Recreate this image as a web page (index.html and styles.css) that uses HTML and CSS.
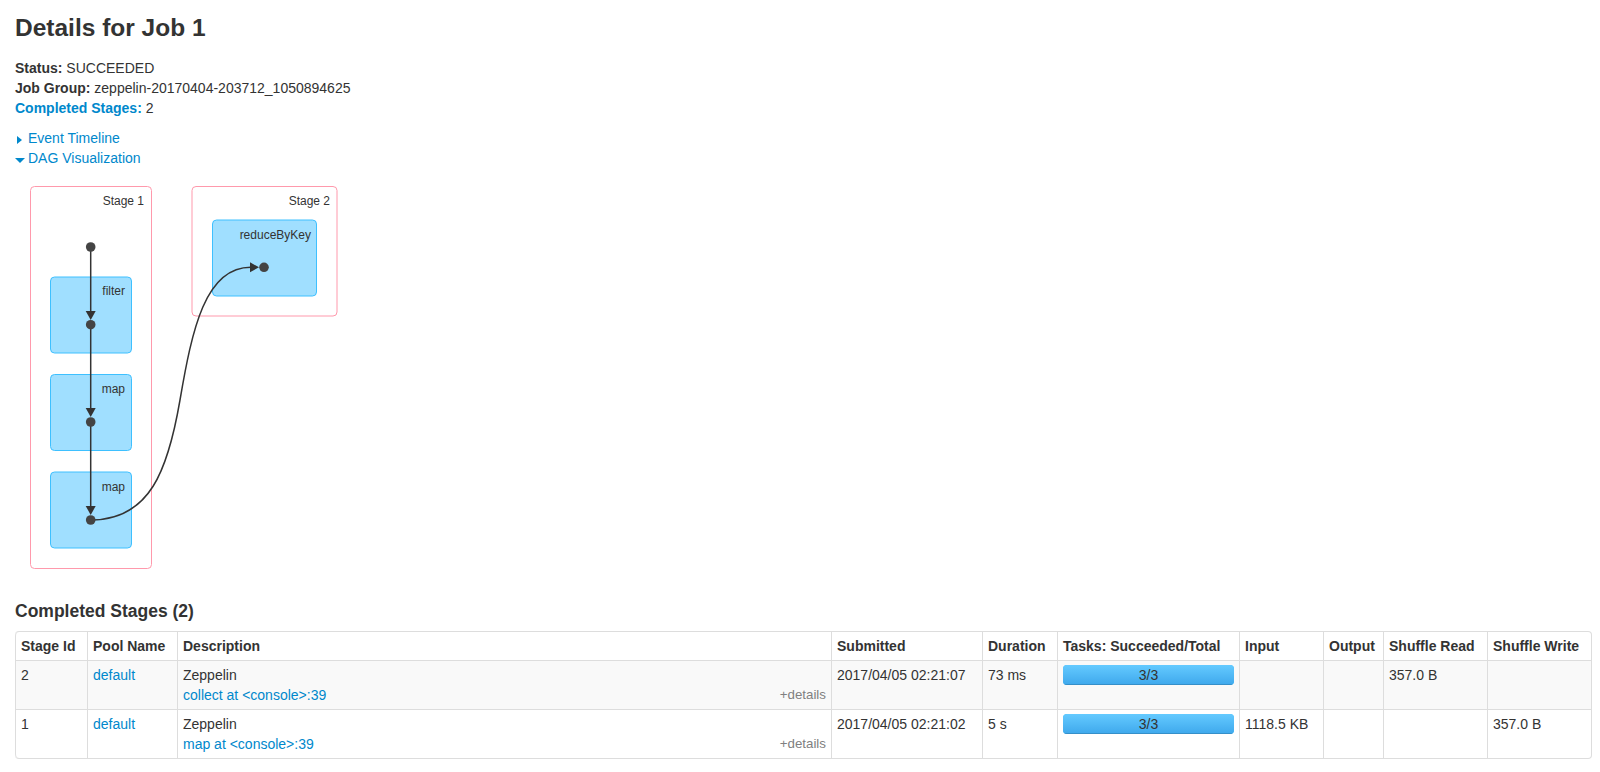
FILE: index.html
```html
<!DOCTYPE html>
<html lang="en">
<head>
<meta charset="utf-8">
<title>Details for Job 1</title>
<link rel="stylesheet" href="styles.css">
</head>
<body>
<div class="page">
  <h3 class="title">Details for Job 1</h3>
  <ul class="summary">
    <li><strong>Status:</strong> SUCCEEDED</li>
    <li><strong>Job Group:</strong> zeppelin-20170404-203712_1050894625</li>
    <li><a href="#completed"><strong>Completed Stages:</strong></a> 2</li>
  </ul>
  <div class="toggles">
    <div class="toggle"><span class="arrow-closed"></span><a href="#">Event Timeline</a></div>
    <div class="toggle"><span class="arrow-open"></span><a href="#">DAG Visualization</a></div>
  </div>
  <svg class="dag" width="340" height="423" viewBox="15 168 340 423" xmlns="http://www.w3.org/2000/svg">
    <g class="stage">
      <rect x="30.5" y="186.5" width="121" height="382" rx="4" ry="4"/>
      <text x="144" y="205" text-anchor="end">Stage 1</text>
    </g>
    <g class="stage">
      <rect x="192" y="186.5" width="145" height="129.5" rx="4" ry="4"/>
      <text x="330" y="205" text-anchor="end">Stage 2</text>
    </g>
    <g class="node">
      <rect x="50.5" y="277" width="81" height="76" rx="4" ry="4"/>
      <text x="125" y="295" text-anchor="end">filter</text>
    </g>
    <g class="node">
      <rect x="50.5" y="374.5" width="81" height="76" rx="4" ry="4"/>
      <text x="125" y="393" text-anchor="end">map</text>
    </g>
    <g class="node">
      <rect x="50.5" y="472" width="81" height="76" rx="4" ry="4"/>
      <text x="125" y="491" text-anchor="end">map</text>
    </g>
    <g class="node">
      <rect x="212.5" y="220" width="104" height="76" rx="4" ry="4"/>
      <text x="311" y="239" text-anchor="end">reduceByKey</text>
    </g>
    <path class="edge" d="M90.7 247 L90.7 312"/>
    <polygon class="head" points="85.7,311 95.7,311 90.7,320"/>
    <path class="edge" d="M90.7 325 L90.7 409"/>
    <polygon class="head" points="85.7,408 95.7,408 90.7,417"/>
    <path class="edge" d="M90.7 422 L90.7 507"/>
    <polygon class="head" points="85.7,506 95.7,506 90.7,515"/>
    <path class="edge" d="M90.7 520 C150 520 168 470 180 400 S205 267 251 267.3"/>
    <polygon class="head" points="250,262.3 250,272.3 259,267.3"/>
    <circle cx="90.7" cy="247" r="4.8"/>
    <circle cx="90.7" cy="324.7" r="4.8"/>
    <circle cx="90.7" cy="422" r="4.8"/>
    <circle cx="90.7" cy="520" r="4.8"/>
    <circle cx="264" cy="267.3" r="4.8"/>
  </svg>
  <h4 class="section-title" id="completed">Completed Stages (2)</h4>
  <table class="stages">
    <thead>
      <tr>
        <th class="c-id">Stage Id</th>
        <th class="c-pool">Pool Name</th>
        <th class="c-desc">Description</th>
        <th class="c-sub">Submitted</th>
        <th class="c-dur">Duration</th>
        <th class="c-tasks">Tasks: Succeeded/Total</th>
        <th class="c-in">Input</th>
        <th class="c-out">Output</th>
        <th class="c-sr">Shuffle Read</th>
        <th class="c-sw">Shuffle Write</th>
      </tr>
    </thead>
    <tbody>
      <tr>
        <td>2</td>
        <td><a href="#">default</a></td>
        <td><span class="desc-input">Zeppelin</span><span class="expand-details">+details</span><a href="#">collect at &lt;console&gt;:39</a></td>
        <td>2017/04/05 02:21:07</td>
        <td>73 ms</td>
        <td><div class="progress"><div class="bar">3/3</div></div></td>
        <td></td>
        <td></td>
        <td>357.0 B</td>
        <td></td>
      </tr>
      <tr>
        <td>1</td>
        <td><a href="#">default</a></td>
        <td><span class="desc-input">Zeppelin</span><span class="expand-details">+details</span><a href="#">map at &lt;console&gt;:39</a></td>
        <td>2017/04/05 02:21:02</td>
        <td>5 s</td>
        <td><div class="progress"><div class="bar">3/3</div></div></td>
        <td>1118.5 KB</td>
        <td></td>
        <td></td>
        <td>357.0 B</td>
      </tr>
    </tbody>
  </table>
</div>
</body>
</html>
```
FILE: styles.css
```css
body {
  margin: 0;
  font-family: "Liberation Sans", Arial, Helvetica, sans-serif;
  font-size: 14px;
  line-height: 20px;
  color: #333;
  background: #fff;
}

a {
  color: #0088cc;
  text-decoration: none;
}

.page {
  padding: 0 8px 0 15px;
}

.title {
  margin: 8px 0 10px;
  font-size: 24.5px;
  line-height: 40px;
  font-weight: bold;
}

.summary {
  list-style: none;
  margin: 0 0 10px;
  padding: 0;
}

.toggle {
  display: flex;
  align-items: center;
  height: 20px;
}

.arrow-closed {
  width: 0;
  height: 0;
  border-top: 4px solid transparent;
  border-bottom: 4px solid transparent;
  border-left: 5px solid #0088cc;
  margin: 3px 6px 0 2px;
}

.arrow-open {
  width: 0;
  height: 0;
  border-left: 5px solid transparent;
  border-right: 5px solid transparent;
  border-top: 5px solid #0088cc;
  margin: 4px 3px 0 0;
}

.dag {
  display: block;
}

.dag .stage rect {
  fill: #fff;
  stroke: #ff99ac;
  stroke-width: 1;
}

.dag text {
  font-family: "Liberation Sans", Arial, Helvetica, sans-serif;
  font-size: 12px;
  fill: #333;
}

.dag .node rect {
  fill: #a0dfff;
  stroke: #3ec0ff;
  stroke-width: 1;
}

.dag .edge {
  fill: none;
  stroke: #333;
  stroke-width: 1.5;
}

.dag .head {
  fill: #333;
}

.dag circle {
  fill: #444;
}

.section-title {
  margin: 10px 0;
  font-size: 17.5px;
  line-height: 20px;
  font-weight: bold;
}

.stages {
  width: 100%;
  table-layout: fixed;
  border-collapse: separate;
  border-spacing: 0;
  border: 1px solid #ddd;
  border-left: 0;
  border-radius: 4px;
}

.stages th,
.stages td {
  box-sizing: border-box;
  padding: 4px 5px;
  line-height: 20px;
  text-align: left;
  vertical-align: top;
  border-left: 1px solid #ddd;
  border-top: 1px solid #ddd;
}

.stages thead th {
  border-top: 0;
  font-weight: bold;
}

.stages thead th:first-child {
  border-top-left-radius: 4px;
}

.stages thead th:last-child {
  border-top-right-radius: 4px;
}

.stages tbody tr:last-child td:first-child {
  border-bottom-left-radius: 4px;
}

.stages tbody tr:last-child td:last-child {
  border-bottom-right-radius: 4px;
}

.stages tbody tr:nth-child(odd) td {
  background: #f9f9f9;
}

.c-id { width: 72px; }
.c-pool { width: 90px; }
.c-sub { width: 151px; }
.c-dur { width: 75px; }
.c-tasks { width: 182px; }
.c-in { width: 84px; }
.c-out { width: 60px; }
.c-sr { width: 104px; }
.c-sw { width: 104px; }

.desc-input {
  display: block;
  white-space: nowrap;
  overflow: hidden;
  text-overflow: ellipsis;
}

.expand-details {
  float: right;
  font-size: 13.33px;
  color: #808080;
  cursor: pointer;
}

.progress {
  height: 20px;
  border-radius: 4px;
  overflow: hidden;
  background: #f5f5f5;
}

.progress .bar {
  height: 20px;
  width: 100%;
  text-align: center;
  color: #333;
  background-color: #3ec0ff;
  background-image: linear-gradient(to bottom, #64caff, #3ea8ec);
  box-shadow: inset 0 -1px 0 rgba(0, 0, 0, 0.15);
}
```
